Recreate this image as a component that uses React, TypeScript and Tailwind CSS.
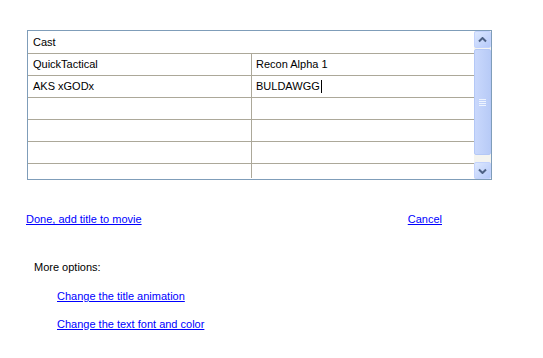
const rows: [string, string][] = [
	['QuickTactical', 'Recon Alpha 1'],
	['AKS xGODx', 'BULDAWGG'],
	['', ''],
	['', ''],
	['', ''],
	['', ''],
];

function ScrollButton({ down }: { down?: boolean }) {
	return (
		<div className="h-[17px] w-[17px] rounded-[2px] border border-[#c3d3fd] bg-gradient-to-br from-[#dde8fe] to-[#b6cafa] flex items-center justify-center">
			<svg width="9" height="6" viewBox="0 0 9 6">
				<path
					d={down ? 'M1 1.5 L4.5 5 L8 1.5' : 'M1 4.5 L4.5 1 L8 4.5'}
					stroke="#4d6185"
					strokeWidth="2"
					fill="none"
				/>
			</svg>
		</div>
	);
}

function Scrollbar() {
	return (
		<div className="w-[17px] h-full bg-[#f4f4f0] flex flex-col">
			<ScrollButton />
			<div className="flex-1 py-[1px]">
				<div className="h-[106px] rounded-[2px] border border-[#b4c8f6] bg-gradient-to-r from-[#c9d8fc] to-[#b8cbf7] flex flex-col items-center justify-center gap-[1px]">
					{[0, 1, 2, 3].map((i) => (
						<div key={i} className="w-[7px] h-[1px] bg-[#eef4fe]" />
					))}
				</div>
			</div>
			<ScrollButton down />
		</div>
	);
}

export default function App() {
	return (
		<div
			className="w-[543px] h-[358px] bg-white text-[11px] text-black overflow-hidden"
			style={{ fontFamily: '"Liberation Sans", Arial, sans-serif' }}
		>
			{/* Cast table */}
			<div className="ml-[27px] mt-[30px] w-[465px] h-[150px] border border-[#7f9db9] flex">
				<div className="flex-1 flex flex-col">
					<div className="h-[23px] border-b border-[#aca899] flex items-center pl-[5px]">
						Cast
					</div>
					{rows.map(([a, b], i) => (
						<div
							key={i}
							className="h-[22px] shrink-0 border-b border-[#aca899] flex last:border-b-0 last:h-[14px]"
						>
							<div className="w-[224px] border-r border-[#aca899] flex items-center pl-[5px]">
								{a}
							</div>
							<div className="flex-1 flex items-center pl-[4px]">
								{b}
								{i === 1 && <span className="inline-block w-[1px] h-[13px] bg-black ml-[1px]" />}
							</div>
						</div>
					))}
				</div>
				<Scrollbar />
			</div>

			{/* Actions */}
			<div className="flex justify-between mt-[31px] ml-[26px] w-[416px]">
				<a href="#" className="text-[#0000ff] underline">
					Done, add title to movie
				</a>
				<a href="#" className="text-[#0000ff] underline">
					Cancel
				</a>
			</div>

			<div className="ml-[34px] mt-[31px]">More options:</div>
			<div className="ml-[57px] mt-[13px] flex flex-col gap-[11px]">
				<a href="#" className="text-[#0000ff] underline">
					Change the title animation
				</a>
				<a href="#" className="text-[#0000ff] underline">
					Change the text font and color
				</a>
			</div>
		</div>
	);
}
